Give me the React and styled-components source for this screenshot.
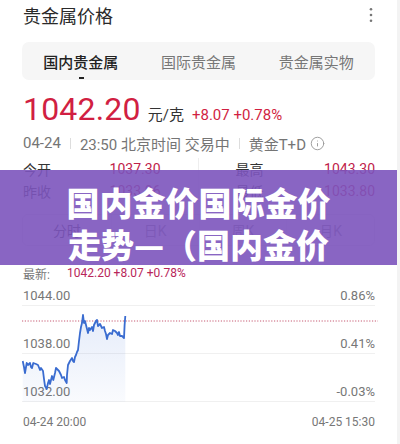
import React from "react";
import styled, { createGlobalStyle } from "styled-components";
import { Info } from "lucide-react";

const Global = createGlobalStyle`
  html, body { margin: 0; padding: 0; background: #f3f3f3; }
  body { font-family: Roboto, "Noto Sans CJK SC", sans-serif; }
  * { box-sizing: border-box; }
`;

const Page = styled.div`
  position: relative;
  width: 397px;
  height: 444px;
  background: #fff;
  padding: 0 22px;
  overflow: hidden;
`;

const Header = styled.div`
  height: 30px;
  display: flex;
  align-items: center;
  justify-content: space-between;
`;

const Title = styled.div`
  font-size: 18px;
  color: #2a2a2a;
  padding-left: 1px;
`;

const Dots = styled.svg`
  margin-right: 1px;
`;

const TabBar = styled.div`
  margin-top: 12px;
  height: 38px;
  background: #f6f6f6;
  border-radius: 7px;
  display: grid;
  grid-template-columns: repeat(3, 1fr);
`;

const Tab = styled.div`
  position: relative;
  display: flex;
  align-items: center;
  justify-content: center;
  font-size: 15px;
  color: ${(p) => (p.$active ? "#222" : "#777")};
  font-weight: ${(p) => (p.$active ? 500 : 400)};
  &::after {
    content: "";
    display: ${(p) => (p.$active ? "block" : "none")};
    position: absolute;
    bottom: 1px;
    left: 50%;
    margin-left: -2px;
    width: 5px;
    height: 2px;
    background: #222;
  }
`;

const PriceRow = styled.div`
  margin-top: 9px;
  display: flex;
  align-items: baseline;
  line-height: 40px;
  padding-left: 1px;
`;

const Price = styled.span`
  font-size: 32px;
  color: #d11f42;
  letter-spacing: 0.2px;
`;

const Unit = styled.span`
  font-size: 15px;
  color: #333;
  margin-left: 7px;
`;

const Change = styled.span`
  font-size: 15px;
  color: #d11f42;
  margin-left: 8px;
`;

const InfoLine = styled.div`
  margin-top: -2px;
  height: 20px;
  display: flex;
  align-items: center;
  font-size: 15px;
  color: #757575;
  padding-left: 1px;
`;

const Sep = styled.span`
  width: 1px;
  height: 11px;
  background: #ddd;
  margin: 0 9px;
`;

const InfoIcon = styled(Info)`
  margin-left: 4px;
  color: #999;
`;

const Stats = styled.div`
  margin-top: 5px;
  display: grid;
  grid-template-columns: 1fr 1fr;
`;

const StatCol = styled.div`
  display: flex;
  flex-direction: column;
  padding: ${(p) => (p.$right ? "0 0 0 37px" : "0 37px 0 1px")};
  border-right: ${(p) => (p.$right ? "none" : "1px solid #eee")};
`;

const StatRow = styled.div`
  height: 22px;
  display: flex;
  align-items: center;
  justify-content: space-between;
  font-size: 14px;
`;

const StatLabel = styled.span`
  color: #333;
`;

const StatValue = styled.span`
  color: #c0214a;
`;

const Periods = styled.div`
  margin-top: 12px;
  height: 32px;
  border: 1px solid #e6e6e6;
  border-radius: 6px;
  display: grid;
  grid-template-columns: repeat(4, 1fr);
`;

const Period = styled.div`
  display: flex;
  align-items: center;
  justify-content: center;
  font-size: 14px;
  color: ${(p) => (p.$active ? "#333" : "#888")};
  border-left: ${(p) => (p.$first ? "none" : "1px solid #eee")};
`;

const Latest = styled.div`
  margin-top: 19px;
  height: 16px;
  display: flex;
  align-items: center;
  font-size: 12px;
  padding-left: 1px;
`;

const LatestLabel = styled.span`
  color: #777;
  width: 44px;
`;

const LatestValue = styled.span`
  color: #b8265a;
`;

const Chart = styled.div`
  position: relative;
  margin-top: 7px;
`;

const GridRow = styled.div`
  height: ${(p) => (p.$first ? "18px" : "48px")};
  display: flex;
  align-items: flex-end;
  justify-content: space-between;
  border-bottom: 1px solid #f0f0f0;
  font-size: 13px;
  color: #777;
  line-height: 18px;
  padding-left: 1px;
`;

const AxisRow = styled.div`
  margin-top: 12px;
  height: 16px;
  display: flex;
  align-items: center;
  justify-content: space-between;
  font-size: 12px;
  color: #777;
  padding-left: 1px;
`;

const Plot = styled.svg`
  position: absolute;
  left: 0;
  top: 0;
  pointer-events: none;
`;

const Overlay = styled.div`
  position: absolute;
  left: 0;
  right: 0;
  top: 170px;
  height: 95px;
  background: rgba(124, 84, 188, 0.9);
  padding-top: 11px;
  text-align: center;
  color: #fff;
  font-family: "Noto Sans CJK SC", sans-serif;
  font-weight: 900;
  font-size: 33px;
  line-height: 42px;
`;

const pts = [
  [22.7, 358], [24, 364], [25, 370], [26.7, 360], [28, 362], [30, 360], [31, 364], [32, 365],
  [33.3, 360], [36, 361], [38, 362], [40, 367], [41, 365], [43, 368], [44, 376], [45, 383],
  [46.7, 386], [48, 380], [49, 377], [50, 381], [52, 373], [53.3, 377], [55, 370], [56, 365],
  [58, 367], [59, 368], [61, 372], [62, 375], [64, 374], [65, 377], [66.7, 380], [67, 372],
  [68, 362], [70, 358], [72, 355], [73, 358], [74, 359], [75, 354], [76, 352], [77, 349],
  [78, 347], [79, 338], [80, 330], [81, 324], [82, 320], [83, 312], [84, 320], [85, 318],
  [86, 322], [87, 326], [88, 330], [89, 325], [90, 327], [92, 324], [93, 328], [94, 322],
  [95, 320], [96, 318], [97, 317], [98, 323], [100, 321], [102, 325], [104, 324], [105, 328],
  [106, 331], [107, 336], [108, 332], [110, 330], [112, 331], [113, 327], [115, 328], [117, 330],
  [118, 332], [119, 329], [120, 333], [122, 333], [124, 335], [124.6, 322], [125.3, 313],
];

function Line() {
  const ox = 22;
  const oy = 285;
  const p = pts.map(([x, y]) => [x - ox, y - oy]);
  const d = p.map(([x, y], i) => `${i ? "L" : "M"}${x.toFixed(1)} ${y}`).join(" ");
  const last = p[p.length - 1];
  const fill = `${d} L${last[0]} 114 L${p[0][0]} 114 Z`;
  return (
    <Plot width="356" height="120" viewBox="0 0 356 120">
      <defs>
        <linearGradient id="gf" x1="0" y1="0" x2="0" y2="1">
          <stop offset="0" stopColor="#4a78d8" stopOpacity="0.14" />
          <stop offset="1" stopColor="#4a78d8" stopOpacity="0.03" />
        </linearGradient>
      </defs>
      <line x1="0" x2="356" y1="33" y2="33" stroke="#c65a72" strokeWidth="1" strokeDasharray="1.2 1.6" />
      <path d={fill} fill="url(#gf)" />
      <path d={d} fill="none" stroke="#3a6cd0" strokeWidth="1.8" strokeLinejoin="round" />
    </Plot>
  );
}

export default function App() {
  return (
    <>
      <Global />
      <Page>
        <Header>
          <Title>贵金属价格</Title>
          <Dots width="6" height="18" viewBox="0 0 6 18">
            <circle cx="3" cy="3.3" r="1.3" fill="#777" />
            <circle cx="3" cy="9" r="1.3" fill="#777" />
            <circle cx="3" cy="14.7" r="1.3" fill="#777" />
          </Dots>
        </Header>
        <TabBar>
          <Tab $active>国内贵金属</Tab>
          <Tab>国际贵金属</Tab>
          <Tab>贵金属实物</Tab>
        </TabBar>
        <PriceRow>
          <Price>1042.20</Price>
          <Unit>元/克</Unit>
          <Change>+8.07 +0.78%</Change>
        </PriceRow>
        <InfoLine>
          04-24<Sep />23:50 北京时间 交易中<Sep />黄金T+D
          <InfoIcon size={15} strokeWidth={1.5} />
        </InfoLine>
        <Stats>
          <StatCol>
            <StatRow><StatLabel>今开</StatLabel><StatValue>1037.30</StatValue></StatRow>
            <StatRow><StatLabel>昨收</StatLabel><StatValue>1033.06</StatValue></StatRow>
          </StatCol>
          <StatCol $right>
            <StatRow><StatLabel>最高</StatLabel><StatValue>1043.30</StatValue></StatRow>
            <StatRow><StatLabel>最低</StatLabel><StatValue>1033.80</StatValue></StatRow>
          </StatCol>
        </Stats>
        <Periods>
          <Period $first $active>分时</Period>
          <Period>日K</Period>
          <Period>周K</Period>
          <Period>月K</Period>
        </Periods>
        <Latest>
          <LatestLabel>最新:</LatestLabel>
          <LatestValue>1042.20 +8.07 +0.78%</LatestValue>
        </Latest>
        <Chart>
          <GridRow $first><span>1044.00</span><span>0.86%</span></GridRow>
          <GridRow><span>1038.00</span><span>0.41%</span></GridRow>
          <GridRow><span>1032.00</span><span>-0.03%</span></GridRow>
          <AxisRow><span>04-24 20:00</span><span>04-25 15:30</span></AxisRow>
          <Line />
        </Chart>
        <Overlay>
          国内金价国际金价
          <br />
          走势—（国内金价
        </Overlay>
      </Page>
    </>
  );
}
